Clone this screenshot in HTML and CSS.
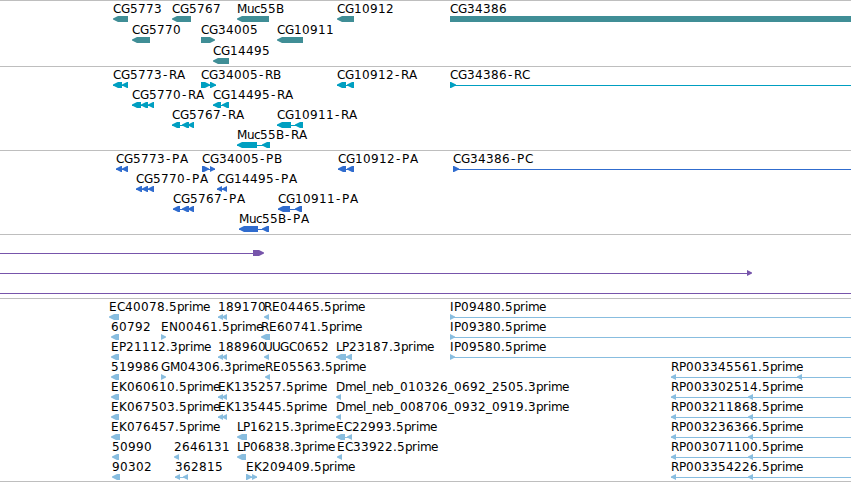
FILE: index.html
```html
<!DOCTYPE html>
<html lang="en">
<head>
<meta charset="utf-8">
<title>Genome tracks</title>
<link rel="stylesheet" href="styles.css">
</head>
<body>
<main class="browser" id="browser"></main>
<script src="tracks.js"></script>
</body>
</html>
```

FILE: styles.css
```css
body {
  margin: 0;
  background: #fff;
  overflow: hidden;
}

.browser {
  display: flex;
  flex-direction: column;
  width: 851px;
  height: 481px;
  border-bottom: 1px solid #bebebe;
}

.track {
  display: block;
  flex: none;
  box-sizing: border-box;
  width: 100%;
  border-top: 1px solid #bebebe;
}

.label {
  fill: #000;
  font: 12px "DejaVu Sans", sans-serif;
  font-kerning: none;
}

.genes { color: #408e96; }
.transcripts { color: #009fc1; }
.proteins { color: #306cce; }
.regions { color: #7755ab; }
.clones { color: #88bddf; }

.glyph { fill: currentColor; }
.intron { fill: currentColor; shape-rendering: crispEdges; }
```

FILE: tracks.js
```js
// Feature: [row, label, strand, exons, lineStart, lineEnd]
// strand: -1 points left, 1 points right, 0 is a plain bar.
const END = 851;
const tracks = [
  { name: "genes", height: 66, pitch: 21, features: [
    [0, "CG5773", -1, [[113, 128]]],
    [0, "CG5767", -1, [[172, 191]]],
    [0, "Muc55B", -1, [[237, 269]]],
    [0, "CG10912", -1, [[337, 354]]],
    [0, "CG34386", 0, [[450, END]]],
    [1, "CG5770", -1, [[132, 150]]],
    [1, "CG34005", 1, [[201, 215]]],
    [1, "CG10911", -1, [[277, 303]]],
    [2, "CG14495", -1, [[213, 229]]]
  ]},
  { name: "transcripts", height: 84, pitch: 20, features: [
    [0, "CG5773-RA", -1, [[113, 122], [122, 128]]],
    [0, "CG34005-RB", 1, [[201, 210], [210, 216]]],
    [0, "CG10912-RA", -1, [[337, 346], [347, 354]]],
    [0, "CG34386-RC", 1, [[450, 456]], 450, END],
    [1, "CG5770-RA", -1, [[132, 141], [141, 148], [148, 154]]],
    [1, "CG14495-RA", -1, [[213, 221], [222, 229]]],
    [2, "CG5767-RA", -1, [[172, 180], [182, 189], [188, 194]]],
    [2, "CG10911-RA", -1, [[277, 291], [295, 303]]],
    [3, "Muc55B-RA", -1, [[237, 257], [262, 270]]]
  ]},
  { name: "proteins", height: 84, pitch: 20, features: [
    [0, "CG5773-PA", -1, [[116, 122], [122, 128]]],
    [0, "CG34005-PB", 1, [[202, 209], [210, 215]]],
    [0, "CG10912-PA", -1, [[338, 346], [347, 354]]],
    [0, "CG34386-PC", 1, [[453, 459]], 453, END],
    [1, "CG5770-PA", -1, [[136, 142], [142, 148], [148, 154]]],
    [1, "CG14495-PA", -1, [[217, 222], [222, 227]]],
    [2, "CG5767-PA", -1, [[173, 180], [182, 189], [188, 194]]],
    [2, "CG10911-PA", -1, [[278, 290], [295, 302]]],
    [3, "Muc55B-PA", -1, [[239, 258], [262, 269]]]
  ]},
  { name: "regions", height: 64, pitch: 20, features: [
    [0, "", 1, [[253, 264]], 0, 254],
    [1, "", 1, [[747, 752]], 0, 748],
    [2, "", 1, [], 0, END]
  ]},
  { name: "clones", height: 183, pitch: 20, features: [
    [0, "EC40078.5prime", -1, [[109, 119]]],
    [0, "189170", -1, [[218, 223], [222, 227]]],
    [0, "RE04465.5prime", -1, [[264, 269]]],
    [0, "IP09480.5prime", 1, [[450, 455]], 450, END],
    [1, "60792", -1, [[111, 119]]],
    [1, "EN00461.5prime", 1, [[161, 166]]],
    [1, "RE60741.5prime", -1, [[261, 270]]],
    [1, "IP09380.5prime", 1, [[450, 455]], 450, END],
    [2, "EP21112.3prime", -1, [[111, 119]]],
    [2, "188960", -1, [[218, 223], [222, 227]]],
    [2, "UUGC0652", -1, [[264, 269]]],
    [2, "LP23187.3prime", -1, [[336, 346], [346, 352]]],
    [2, "IP09580.5prime", 1, [[450, 455]], 450, END],
    [3, "519986", -1, [[111, 119]]],
    [3, "GM04306.3prime", 1, [[161, 166]]],
    [3, "RE05563.5prime", -1, [[265, 270]]],
    [3, "RP003345561.5prime", -1, [[671, 676], [797, 802]], 671, END],
    [4, "EK060610.5prime", -1, [[111, 119]]],
    [4, "EK135257.5prime", -1, [[218, 223], [222, 227]]],
    [4, "Dmel_neb_010326_0692_2505.3prime", -1, [[336, 341]]],
    [4, "RP003302514.5prime", -1, [[671, 676], [748, 753]], 671, END],
    [5, "EK067503.5prime", -1, [[111, 119]]],
    [5, "EK135445.5prime", -1, [[218, 223], [222, 227]]],
    [5, "Dmel_neb_008706_0932_0919.3prime", -1, [[336, 341]]],
    [5, "RP003211868.5prime", -1, [[671, 676], [748, 753]], 671, END],
    [6, "EK076457.5prime", -1, [[111, 120]]],
    [6, "LP16215.3prime", -1, [[237, 247]]],
    [6, "EC22993.5prime", -1, [[336, 345], [347, 352]]],
    [6, "RP003236366.5prime", -1, [[671, 676], [748, 753]], 671, END],
    [7, "50990", -1, [[112, 119]]],
    [7, "2646131", -1, [[174, 179]]],
    [7, "LP06838.3prime", -1, [[237, 246]]],
    [7, "EC33922.5prime", -1, [[337, 342]]],
    [7, "RP003071100.5prime", -1, [[671, 676], [748, 753]], 671, END],
    [8, "90302", -1, [[112, 120]]],
    [8, "362815", -1, [[175, 180], [183, 188]]],
    [8, "EK209409.5prime", 1, [[246, 252], [252, 257]]],
    [8, "RP003354226.5prime", -1, [[671, 676], [748, 753]], 671, END]
  ]}
];

// Whole-pixel advance widths for the label font; digits and other capitals are 8.
const advances = {
  G: 9, M: 10, N: 9, D: 9, I: 4, L: 6, P: 7, ".": 4, "-": 7, _: 6,
  u: 7, c: 6, p: 7, r: 5, i: 3, m: 11, e: 7, l: 3, n: 7
};

function add(parent, tag, className, attributes) {
  const node = document.createElementNS("http://www.w3.org/2000/svg", tag);
  node.setAttribute("class", className);
  for (const key in attributes) node.setAttribute(key, attributes[key]);
  parent.appendChild(node);
  return node;
}

function arrow(x0, x1, y, strand) {
  if (strand === 0) return `${x0},${y} ${x1},${y} ${x1},${y + 6} ${x0},${y + 6}`;
  const head = Math.min(5, x1 - x0);
  const tip = strand < 0 ? x0 : x1;
  const tail = strand < 0 ? x1 : x0;
  const neck = tip - strand * head;
  return `${tip},${y + 2.5} ${neck},${y} ${tail},${y} ${tail},${y + 6} ${neck},${y + 6} ${tip},${y + 3.5}`;
}

for (const track of tracks) {
  const svg = add(document.getElementById("browser"), "svg", `track ${track.name}`, {
    height: track.height, viewBox: `0 0 851 ${track.height - 1}`
  });
  for (const [row, label, strand, exons, from, to] of track.features) {
    const top = row * track.pitch;
    const start = from ?? exons[0][0];
    const end = to ?? exons[exons.length - 1][1];
    if (exons.length !== 1 || from !== undefined) {
      add(svg, "rect", "intron", { x: start, y: top + 18, width: end - start, height: 1 });
    }
    for (const [x0, x1] of exons) {
      add(svg, "polygon", "glyph", { points: arrow(x0, x1, top + 15, strand) });
    }
    if (label) {
      let x = start;
      const positions = [...label].map(character => {
        // The hyphen sits in the middle of its cell.
        const current = character === "-" ? x + 1 : x;
        x += character === "P" && label.includes("-P") ? 8 : advances[character] ?? 8;
        return current;
      });
      add(svg, "text", "label", { x: positions.join(" "), y: top + 12 }).textContent = label;
    }
  }
}
```
